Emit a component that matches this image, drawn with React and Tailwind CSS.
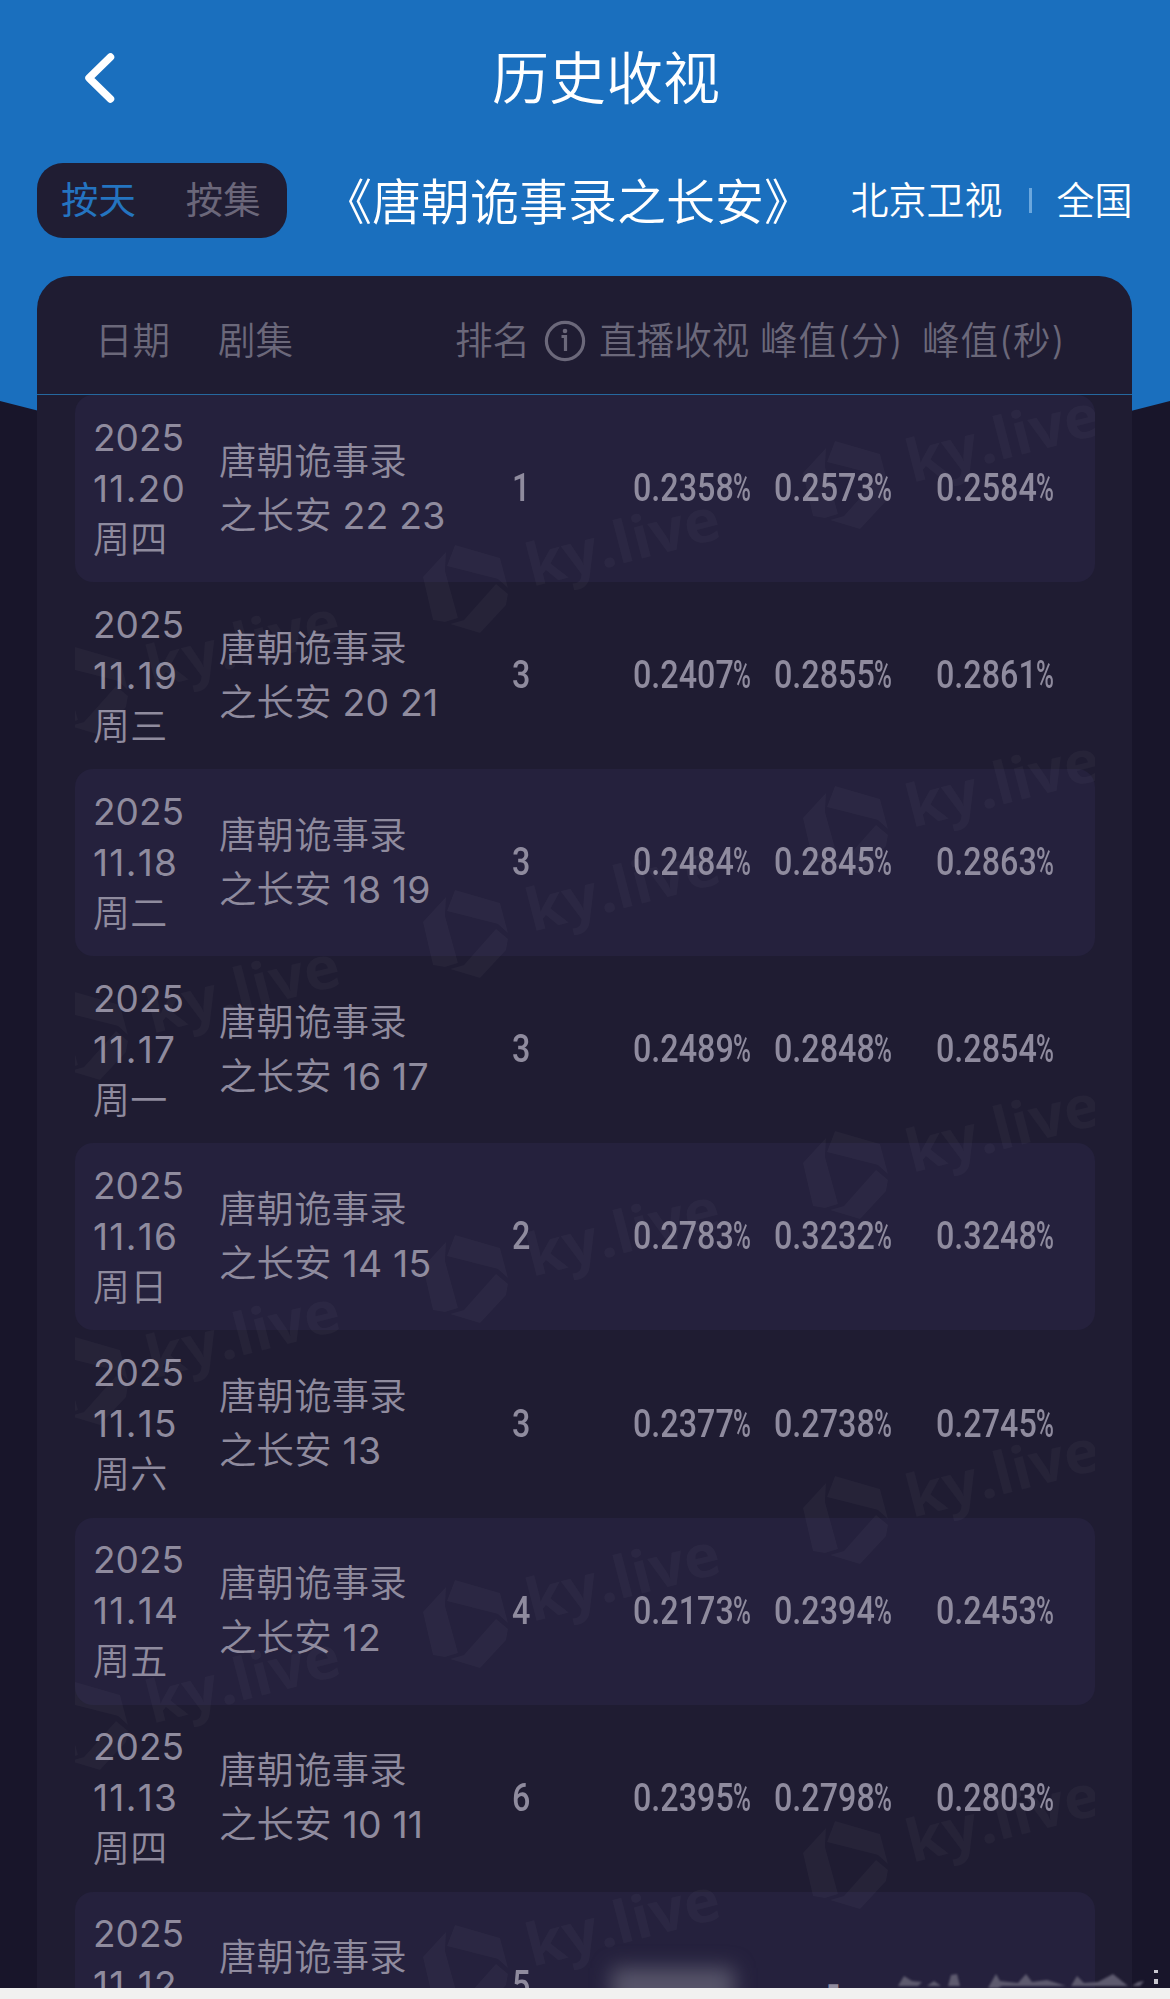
import React, { useState } from 'react';

const ROWS = [
  { date: '11.20', week: '周四', ep: '22 23', rank: '1', live: '0.2358', min: '0.2573', sec: '0.2584' },
  { date: '11.19', week: '周三', ep: '20 21', rank: '3', live: '0.2407', min: '0.2855', sec: '0.2861' },
  { date: '11.18', week: '周二', ep: '18 19', rank: '3', live: '0.2484', min: '0.2845', sec: '0.2863' },
  { date: '11.17', week: '周一', ep: '16 17', rank: '3', live: '0.2489', min: '0.2848', sec: '0.2854' },
  { date: '11.16', week: '周日', ep: '14 15', rank: '2', live: '0.2783', min: '0.3232', sec: '0.3248' },
  { date: '11.15', week: '周六', ep: '13', rank: '3', live: '0.2377', min: '0.2738', sec: '0.2745' },
  { date: '11.14', week: '周五', ep: '12', rank: '4', live: '0.2173', min: '0.2394', sec: '0.2453' },
  { date: '11.13', week: '周四', ep: '10 11', rank: '6', live: '0.2395', min: '0.2798', sec: '0.2803' },
  { date: '11.12', week: '', ep: '', rank: '5', live: '', min: '-', sec: '' },
];

// top-left corner of every watermark, relative to the list
const MARKS = [];
for (let i = 0; i < 5; i++) {
  MARKS.push([728, 46 + i * 345]);
  MARKS.push([348, 150 + i * 345]);
  MARKS.push([-32, 252 + i * 345]);
}

function Watermark() {
  return (
    <svg className="absolute inset-0 pointer-events-none" width="1020" height="1593" fill="#fff" fillOpacity="0.032">
      {MARKS.map(([x, y]) => (
        <g key={`${x}-${y}`} transform={`translate(${x} ${y})`}>
          <path d="M32 0 L77 13 L85 43 L75 34 L24 21 Z" />
          <path d="M23 7 L0 32 L10 75 L22 77 L35 73 L22 26 Z" />
          <path d="M73 39 L85 49 L83 60 L57 88 L27 79 L41 75 Z" />
          <text
            transform="translate(109 42) rotate(-14.5)"
            textLength="198"
            lengthAdjust="spacingAndGlyphs"
            className="font-['Open_Sans',sans-serif] font-bold text-[59px]"
          >
            ky.live
          </text>
        </g>
      ))}
    </svg>
  );
}

function Rating({ value }) {
  if (!value) return null;
  if (value === '-') return <span className="ml-[53px] font-[Roboto,sans-serif] text-[38px] font-medium">-</span>;
  return (
    <span className="flex font-[Roboto,sans-serif] text-[38px] font-medium">
      <span className="w-[100px] origin-left scale-x-[0.85]">{value}</span>
      <span className="w-[18px] origin-left scale-x-[0.64]">%</span>
    </span>
  );
}

function Row({ row, striped }) {
  return (
    <div className={`flex h-[187.1px] shrink-0 items-center rounded-[18px] pl-[18px] text-[#8f8b9e] ${striped ? 'bg-[#25213d]' : ''}`}>
      <div className="w-[126px] h-[154px] text-[37px] leading-[51px] tracking-[0.3px] [font-kerning:none]">
        <p className="font-normal tracking-normal">2025</p>
        <p className="font-normal tracking-[1.3px]">{row.date}</p>
        <p>{row.week}</p>
      </div>
      <div className="w-[283px] text-[37.4px] leading-[54px] tracking-[0.2px] [font-kerning:none]">
        <p>唐朝诡事录</p>
        <p>
          {row.ep ? '之长安 ' : '\u00a0'}
          <span className="font-normal">{row.ep}</span>
        </p>
      </div>
      <div className="flex w-[131px] pl-[10px] font-[Roboto,sans-serif] text-[38px] font-medium">
        <span className="origin-left scale-x-[0.85]">{row.rank}</span>
      </div>
      <div className="w-[141px]"><Rating value={row.live} /></div>
      <div className="w-[162px]"><Rating value={row.min} /></div>
      <div><Rating value={row.sec} /></div>
    </div>
  );
}

function App() {
  const [mode, setMode] = useState('day');

  return (
    <div className="relative flex h-[1999px] w-[1170px] flex-col overflow-hidden bg-[#18152a] font-[Inter,'Noto_Sans_CJK_SC',sans-serif] font-[350]">
      {/* Blue backdrop with the slanted bottom edge */}
      <svg className="absolute left-0 top-0" width="1170" height="550">
        <path d="M0 0 H1170 V401 L585 550 L0 401 Z" fill="#1a6fbe" />
      </svg>

      <header className="relative flex h-[163px] shrink-0 items-start pl-[83px] pt-[49px] text-white">
        <svg className="mt-px" width="34" height="56" viewBox="0 0 34 56" fill="none" stroke="#fff" strokeWidth="7.5" strokeLinecap="round" strokeLinejoin="round">
          <path d="M27.5 7 L6 28 L27.5 49" />
        </svg>
        <h1 className="ml-[375px] text-[57px] leading-[60px] font-[350]">历史收视</h1>
      </header>

      <div className="relative flex h-[113px] shrink-0 items-start pl-[37px] text-white">
        <div className="flex h-[75px] w-[250px] items-center gap-[50px] rounded-[26px] bg-[#201d33] pl-[24px] pt-px text-[37.4px]">
          <button className={mode === 'day' ? 'font-normal text-[#2474c0]' : 'font-normal text-[#6b677a]'} onClick={() => setMode('day')}>按天</button>
          <button className={mode === 'ep' ? 'font-normal text-[#2474c0]' : 'font-normal text-[#6b677a]'} onClick={() => setMode('ep')}>按集</button>
        </div>
        <h2 className="ml-[36px] h-[75px] text-[49px] leading-[80px] font-[350] whitespace-nowrap">《唐朝诡事录之长安》</h2>
        <div className="ml-[37.5px] flex h-[75px] items-center text-[38px]">
          <span>北京卫视</span>
          <span className="ml-[26px] mr-[25px] h-[25px] w-[3px] bg-[#6ba7dd]" />
          <span>全国</span>
        </div>
      </div>

      <main className="relative mx-[37px] mr-[38px] flex h-[1712px] flex-col overflow-hidden rounded-t-[33px] bg-[#1f1c32]">
        <div className="flex h-[119px] shrink-0 items-center border-b border-[#25689f] pl-[58px] pt-[12px] text-[37.6px] text-[#6b687a] whitespace-nowrap">
          <span className="w-[123px]">日期</span>
          <span className="w-[237px]">剧集</span>
          <span className="w-[89px]">排名</span>
          <svg className="mr-[13px]" width="42" height="42" viewBox="0 0 42 42" fill="none" stroke="#6b687a" strokeWidth="3.2">
            <circle cx="21" cy="21" r="18.6" />
            <path d="M17.5 16.5 H21.5 V31" />
            <circle cx="21" cy="11" r="2.3" fill="#6b687a" stroke="none" />
          </svg>
          <span className="w-[161px]">直播收视</span>
          <span className="w-[162px] tracking-[0.9px]">峰值(分)</span>
          <span className="tracking-[0.9px]">峰值(秒)</span>
        </div>

        <div className="relative mx-[38px] mr-[37px] flex h-[1593px] flex-col overflow-hidden">
          {ROWS.map((row, i) => (
            <Row key={row.date} row={row} striped={i % 2 === 0} />
          ))}
          <Watermark />
        </div>
      </main>

      <div className="absolute left-[612px] top-[1968px] h-[40px] w-[122px] bg-[#57556a] blur-[10px]" />
      <svg className="absolute left-[890px] top-[1966px]" width="270" height="22" fill="#5d5a6e">
        <g className="blur-[1px]">
          <path d="M8 20 L14 10 L22 15 L32 16 L28 20 Z" />
          <path d="M37 20 L44 15 L51 20 Z" />
          <path d="M58 20 L61 9 L67 8 L70 20 Z" />
          <path d="M98 22 L106 8 L110 15 L128 17 L136 8 L142 16 L157 14 L176 20 L112 20 L108 22 Z" />
          <path d="M181 20 L187 10 L194 17 L208 16 L223 8 L238 20 Z" />
          <path d="M242 20 L248 16 L254 15 L250 20 Z" />
        </g>
        <path d="M264 4 h4 v3 h-4 z M264 13 h4 v5 h-4 z" fill="#c9c8d0" />
      </svg>

      <footer className="relative h-[11px] shrink-0 bg-[#f1f1f0]" />
    </div>
  );
}

export default App;
